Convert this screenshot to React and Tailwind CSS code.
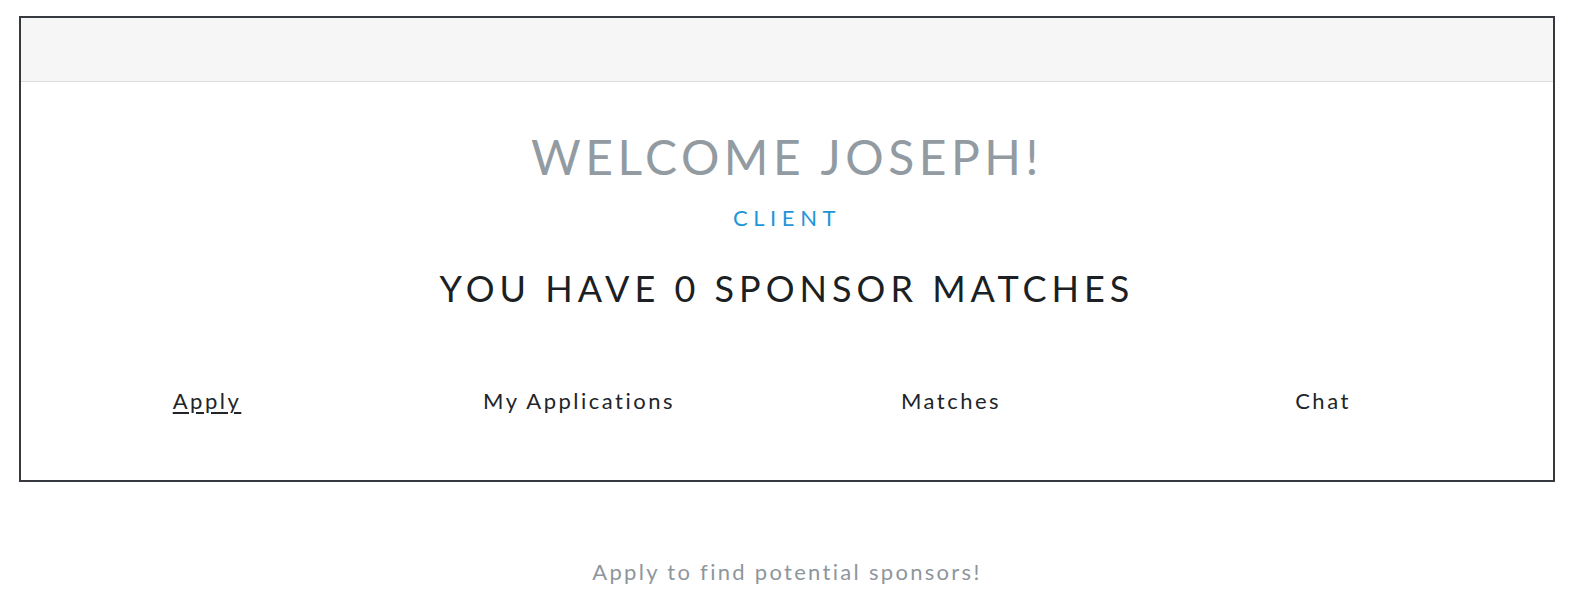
export default function App() {
  const tabs = ['Apply', 'My Applications', 'Matches', 'Chat'];

  return (
    <div style={{ fontFamily: "Lato, 'Noto Sans', sans-serif" }} className="w-[1587px] h-[609px] bg-white overflow-hidden">
      <div className="ml-[19px] mt-[16px] w-[1536px] h-[466px] border-2 border-[#363a3f] flex flex-col">
        <div className="h-[64px] bg-[#f6f6f6] border-b border-[#dcdcdc] shrink-0" />

        <h1 className="mt-[51px] text-center text-[48px] leading-none tracking-[4.5px] text-[#939ba2]">WELCOME JOSEPH!</h1>
        <p className="mt-[26px] text-center text-[22px] leading-none tracking-[5.6px] text-[#1e96d6]">CLIENT</p>
        <h2 className="mt-[41px] text-center text-[36px] leading-none tracking-[5px] text-[#1c1f23]">YOU HAVE 0 SPONSOR MATCHES</h2>

        <nav className="mt-[84px] w-[1488px] grid grid-cols-4">
          {tabs.map((t, i) => (
            <a key={t} href="#" className={`text-center text-[22px] leading-none tracking-[2.5px] text-[#212529] ${i === 0 ? 'underline underline-offset-3' : ''}`}>
              {t}
            </a>
          ))}
        </nav>
      </div>

      <p className="ml-[19px] w-[1536px] mt-[79px] text-center text-[22px] leading-none tracking-[2.3px] text-[#8e969d]">
        Apply to find potential sponsors!
      </p>
    </div>
  );
}
